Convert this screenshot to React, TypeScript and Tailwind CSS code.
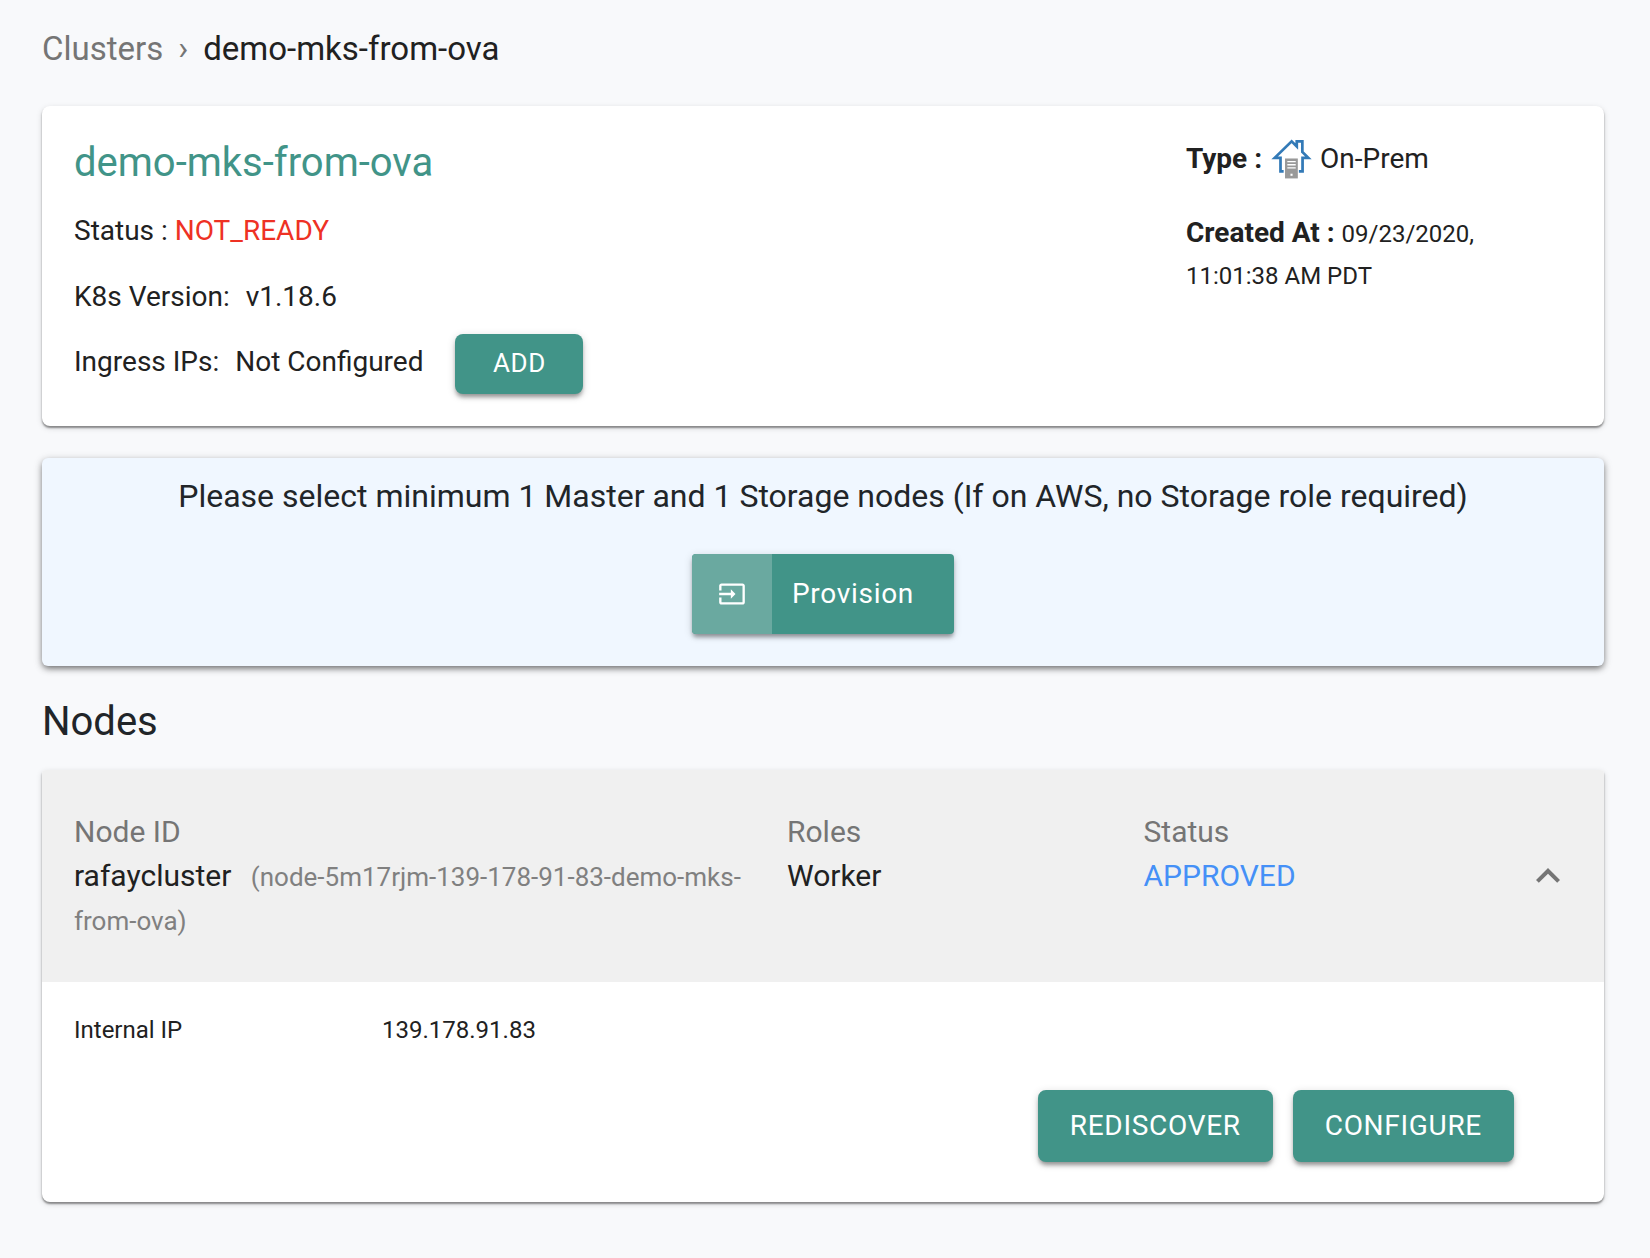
import React, { useState } from "react";

const raised =
  "bg-[#419488] text-white shadow-[0_4px_4px_-1px_rgba(0,0,0,0.35),0_2px_8px_rgba(0,0,0,0.16)]";

function HouseIcon() {
  return (
    <svg viewBox="0 0 40 40" className="h-[42px] w-[42px]" aria-hidden="true">
      <path
        d="M13 31.800H10V18.900H4.500L20.600 3.200l4.900 4.900V3.200h5.300V13.300L36.500 18.900H31V31.800H27.500"
        fill="none"
        stroke="#337ab7"
        strokeWidth="2.600"
      />
      <rect x="14.300" y="19.500" width="12.200" height="19" fill="#999" />
      <path d="M16.500 22.500h8M16.500 25.500h8M16.500 28.500h8" stroke="#fff" strokeWidth="1.300" />
      <rect x="19.500" y="34" width="2" height="2" fill="#fff" />
    </svg>
  );
}

function InputIcon() {
  return (
    <svg viewBox="0 0 24 24" className="h-7 w-7" fill="currentColor" aria-hidden="true">
      <path d="M21 3.010H3c-1.100 0-2 .9-2 2V9h2V4.990h18v14.030H3V15H1v4.010c0 1.100.9 1.980 2 1.980h18c1.100 0 2-.88 2-1.980v-14c0-1.110-.9-2-2-2zM11 16l4-4-4-4v3H1v2h10v3z" />
    </svg>
  );
}

export default function App() {
  const [open, setOpen] = useState(true);
  return (
    <main className="min-h-screen bg-[#f8f9fb] pt-7 pr-[46px] pb-14 pl-[42px] font-['Roboto',sans-serif] text-[28px] leading-[42px] text-[#212121]">
      <nav aria-label="Breadcrumb" className="flex items-center gap-[15px] text-[33px]">
        <a href="#clusters" className="text-[#757575]">Clusters</a>
        <span className="text-[#757575]">›</span>
        <span>demo-mks-from-ova</span>
      </nav>

      <section className="mt-9 flex rounded-lg bg-white px-8 py-8 shadow-[0_2px_2px_rgba(0,0,0,0.4),0_2px_6px_rgba(0,0,0,0.14)]">
        <div className="flex-1">
          <h1 className="text-[40px] leading-[50px] text-[#419488]">demo-mks-from-ova</h1>
          <p className="mt-[22px]">
            Status : <span className="text-[#ee3124]">NOT_READY</span>
          </p>
          <p className="mt-6">
            K8s Version: <span className="ml-[9px]">v1.18.6</span>
          </p>
          <div className="mt-4 flex items-center">
            <p className="pb-1">
              Ingress IPs: <span className="ml-[9px]">Not Configured</span>
            </p>
            <button type="button" className={`ml-8 h-[60px] w-32 rounded-lg pb-0.5 text-[26px] tracking-wide ${raised}`}>
              ADD
            </button>
          </div>
        </div>
        <div className="w-[386px] pr-8">
          <p className="flex items-center gap-2">
            <b>Type :</b>
            <HouseIcon />
            On-Prem
          </p>
          <p className="mt-8">
            <b>Created At :</b> <span className="text-2xl">09/23/2020, 11:01:38 AM PDT</span>
          </p>
        </div>
      </section>

      <section className="mt-8 flex flex-col items-center rounded-md bg-[#f0f7ff] pt-4 pb-8 text-[#212529] shadow-[0_3px_6px_-1px_rgba(0,0,0,0.5),0_2px_10px_rgba(0,0,0,0.18)]">
        <p className="text-[32px] leading-[44px]">
          Please select minimum 1 Master and 1 Storage nodes (If on AWS, no Storage role required)
        </p>
        <button type="button" className={`mt-9 flex h-20 items-center overflow-hidden rounded tracking-wide ${raised}`}>
          <span className="flex h-full w-20 items-center justify-center bg-[#6aa9a0]">
            <InputIcon />
          </span>
          <span className="pr-10 pl-5">Provision</span>
        </button>
      </section>

      <h2 className="mt-8 text-[40px] leading-[48px] text-[#212529]">Nodes</h2>

      <section className="mt-6 overflow-hidden rounded-t-sm rounded-b-lg bg-white shadow-[0_2px_2px_rgba(0,0,0,0.4),0_2px_6px_rgba(0,0,0,0.14)]">
        <div className="flex bg-[#f0f0f0] py-10 pl-8 text-[30px] leading-[44px]">
          <div className="grid flex-1 grid-cols-[2fr_1fr_1fr]">
            <div className="pr-6">
              <div className="text-[#757575]">Node ID</div>
              <div>
                rafaycluster{" "}
                <span className="ml-3 text-[26px] leading-10 text-[#808080]">(node-5m17rjm-139-178-91-83-demo-mks-from-ova)</span>
              </div>
            </div>
            <div>
              <div className="text-[#757575]">Roles</div>
              <div>Worker</div>
            </div>
            <div>
              <div className="text-[#757575]">Status</div>
              <div className="text-[#4590f7]">APPROVED</div>
            </div>
          </div>
          <div className="flex w-[104px] items-center justify-center pr-2">
            <button type="button" aria-label="Toggle node details" aria-expanded={open} onClick={() => setOpen(!open)}>
              <svg viewBox="0 0 24 24" className="h-12 w-12" fill="#757575" aria-hidden="true">
                <path d="M12 8l-6 6 1.410 1.410L12 10.830l4.590 4.580L18 14z" />
              </svg>
            </button>
          </div>
        </div>
        {open && (
          <div className="px-8 pt-7 pb-10">
            <dl className="flex text-2xl leading-10">
              <dt className="w-[308px]">Internal IP</dt>
              <dd>139.178.91.83</dd>
            </dl>
            <div className="mt-10 flex justify-end gap-5 pr-[58px]">
              <button type="button" className={`h-[72px] rounded-lg px-8 tracking-wide ${raised}`}>REDISCOVER</button>
              <button type="button" className={`h-[72px] rounded-lg px-8 tracking-wide ${raised}`}>CONFIGURE</button>
            </div>
          </div>
        )}
      </section>
    </main>
  );
}
